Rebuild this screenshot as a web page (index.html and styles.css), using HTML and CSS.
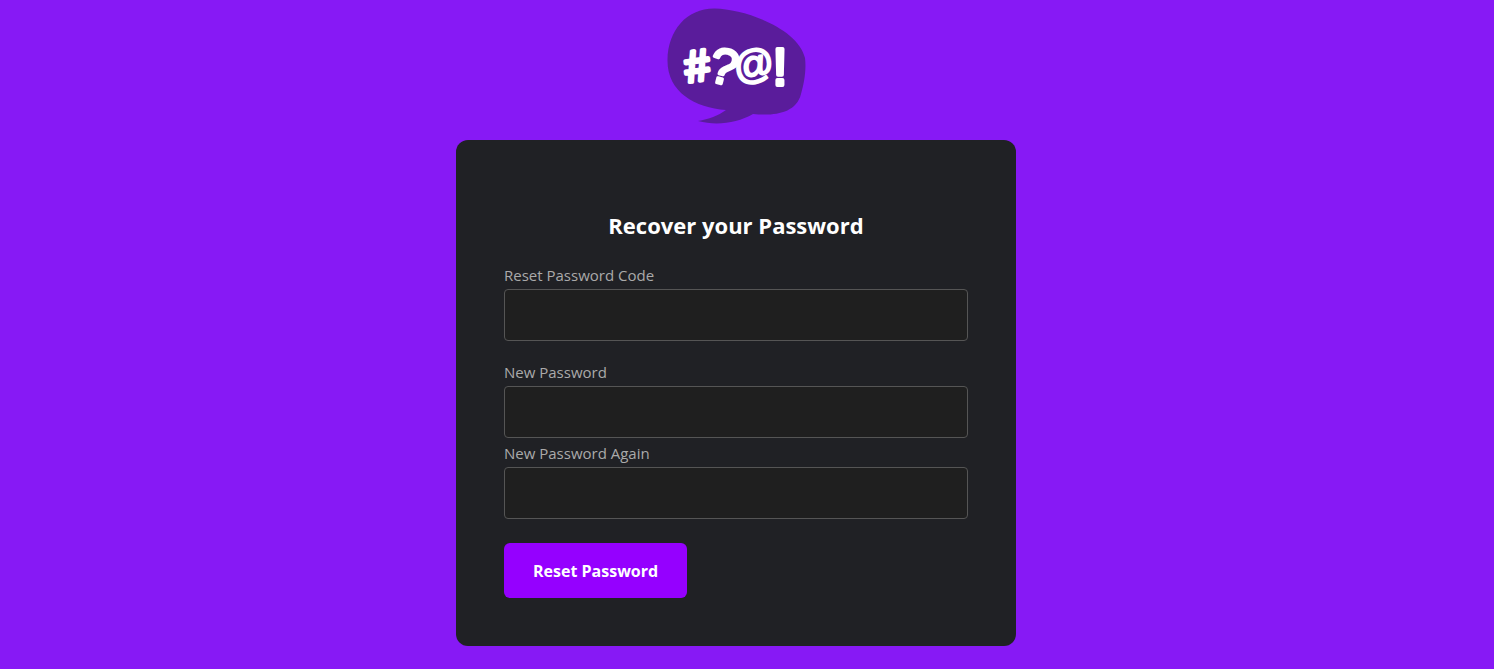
FILE: index.html
```html
<!DOCTYPE html>
<html lang="en">
<head>
<meta charset="utf-8">
<meta name="viewport" content="width=device-width, initial-scale=1">
<title>Recover your Password</title>
<link rel="stylesheet" href="styles.css">
</head>
<body>
<main class="page">
  <svg class="logo" viewBox="0 0 139 116" role="img" aria-label="Speech bubble">
    <path class="bubble" d="M48 0.500C77 1 131 20 138 50C139.500 62 137 76 134 86C129 106 106 108 86 106C70 115 50 118 31 113C42 111 51 108 59 102C28 100 0 84 0.500 52C1 22 20 0 48 0.500Z"/>
    <g class="symbols">
      <text class="hash" x="30" y="73" transform="rotate(-8 30 58)">#</text>
      <text class="question" x="57" y="76" transform="rotate(14 57 58)">?</text>
      <text class="at" x="87" y="70" transform="rotate(-10 87 58)">@</text>
      <text class="bang" x="113" y="77">!</text>
    </g>
  </svg>
  <form class="card">
    <h2 class="title">Recover your Password</h2>
    <div class="field field-code">
      <label for="code">Reset Password Code</label>
      <input id="code" type="text">
    </div>
    <div class="field">
      <label for="password">New Password</label>
      <input id="password" type="password">
    </div>
    <div class="field">
      <label for="again">New Password Again</label>
      <input id="again" type="password">
    </div>
    <button class="submit" type="submit">Reset Password</button>
  </form>
</main>
</body>
</html>
```
FILE: styles.css
```css
* {
  box-sizing: border-box;
}

body {
  margin: 0;
  background: #8719f5;
  color: #fff;
  font-family: "Segoe UI", "Open Sans", "Noto Sans", sans-serif;
  font-size: 15px;
}

.page {
  display: flex;
  flex-direction: column;
  align-items: center;
  gap: 16px;
  padding: 8px 22px 23px 0;
}

.logo {
  display: block;
  width: 139px;
  height: 116px;
}

.bubble {
  fill: #5a1c9b;
}

.symbols {
  fill: #fff;
  stroke: #fff;
  stroke-width: 4;
  stroke-linejoin: round;
  font-family: "Liberation Sans", Arial, sans-serif;
  text-anchor: middle;
}

.hash {
  font-size: 44px;
}

.question {
  font-size: 50px;
  stroke-width: 3;
}

.bang {
  font-size: 52px;
}

.at {
  font-size: 40px;
  stroke-width: 2;
}

.card {
  width: 100%;
  max-width: 560px;
  padding: 48px;
  border-radius: 12px;
  background: #202125;
}

.title {
  margin: 20px 0 22px;
  font-size: 22px;
  font-weight: 700;
  line-height: 34px;
  text-align: center;
}

.field {
  display: flex;
  flex-direction: column;
  gap: 2px;
  margin-bottom: 4px;
  color: #aaa;
  line-height: 23px;
}

.field-code {
  margin-bottom: 20px;
}

.field input {
  width: 100%;
  height: 52px;
  padding: 12px 16px;
  border: 1px solid #555;
  border-radius: 4px;
  background: #1f1f1f;
  color: #fff;
  font: inherit;
}

.submit {
  margin-top: 20px;
  padding: 16px 29px 14px;
  border: 0;
  border-radius: 6px;
  background: #9500ff;
  color: #fff;
  font-family: inherit;
  font-size: 16px;
  font-weight: 700;
  line-height: 25px;
}
```
